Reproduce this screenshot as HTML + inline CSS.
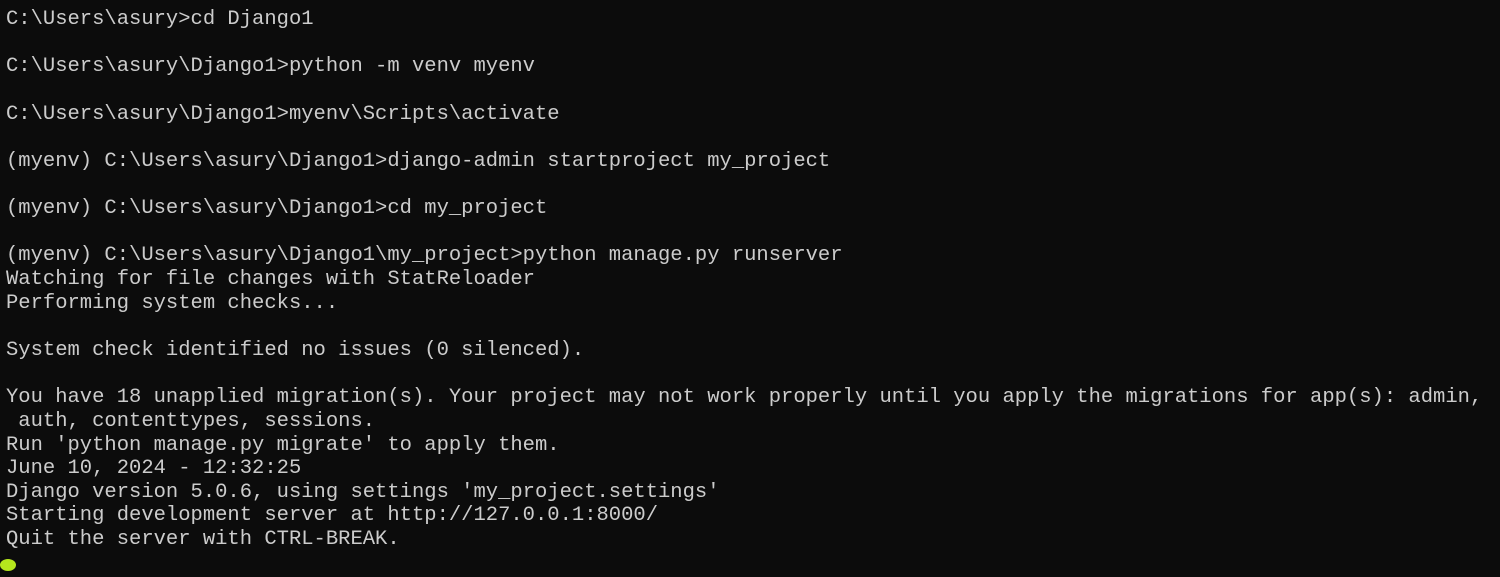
<!DOCTYPE html>
<html><head><meta charset="utf-8"><style>
html,body{margin:0;padding:0;background:#0c0c0c;width:1500px;height:577px;overflow:hidden}
pre{margin:0;position:absolute;left:6px;top:8px;font-family:"Liberation Mono",monospace;font-size:20.5px;line-height:23.64px;color:#cccccc;white-space:pre}
.cur{position:absolute;left:0;top:559px;width:16px;height:12px;border-radius:50%;background:#b5e61d}
</style></head><body>
<pre>C:\Users\asury&gt;cd Django1

C:\Users\asury\Django1&gt;python -m venv myenv

C:\Users\asury\Django1&gt;myenv\Scripts\activate

(myenv) C:\Users\asury\Django1&gt;django-admin startproject my_project

(myenv) C:\Users\asury\Django1&gt;cd my_project

(myenv) C:\Users\asury\Django1\my_project&gt;python manage.py runserver
Watching for file changes with StatReloader
Performing system checks...

System check identified no issues (0 silenced).

You have 18 unapplied migration(s). Your project may not work properly until you apply the migrations for app(s): admin,
 auth, contenttypes, sessions.
Run 'python manage.py migrate' to apply them.
June 10, 2024 - 12:32:25
Django version 5.0.6, using settings 'my_project.settings'
Starting development server at http://127.0.0.1:8000/
Quit the server with CTRL-BREAK.</pre>
<div class="cur"></div>
</body></html>
